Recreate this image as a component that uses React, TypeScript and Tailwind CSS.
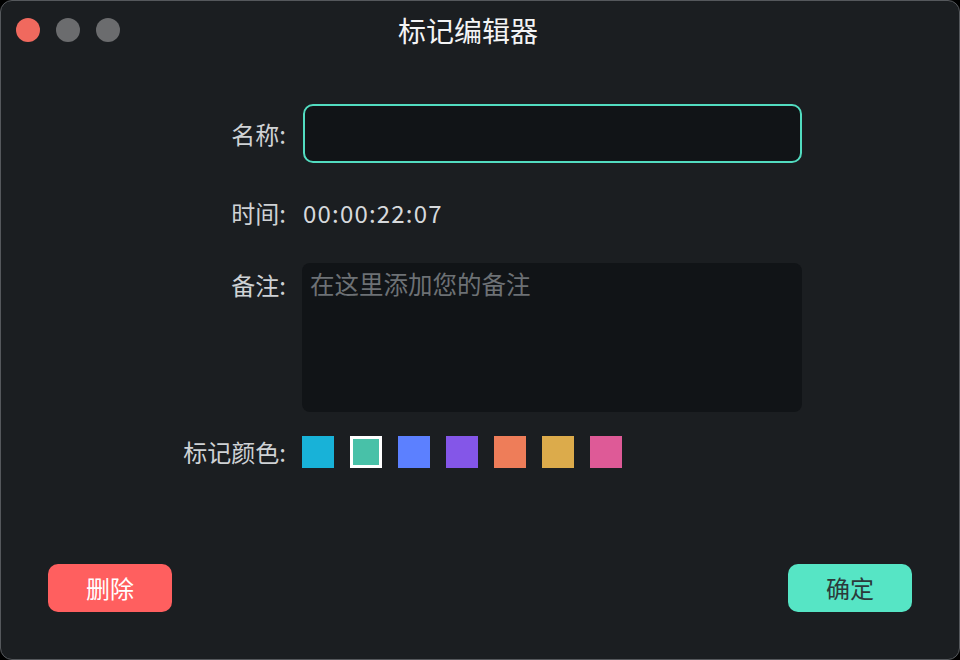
const colors = ["#18b2d8", "#48c1a8", "#5c80ff", "#8456e8", "#ee7d59", "#dcab4b", "#de5a97"];

export default function App() {
  const font = { fontFamily: '"Noto Sans CJK SC", "Noto Sans", sans-serif' };
  return (
    <div className="w-[960px] h-[660px] bg-black" style={font}>
      <div className="w-full h-full rounded-[12px] bg-[#1b1e21] border border-[#55585c] flex flex-col relative overflow-hidden">
        <div className="h-[56px] flex items-center relative">
          <div className="flex gap-[16px] pl-[15px] pt-[1px]">
            <span className="w-[24px] h-[24px] rounded-full bg-[#f0695e]" />
            <span className="w-[24px] h-[24px] rounded-full bg-[#6b6c6e]" />
            <span className="w-[24px] h-[24px] rounded-full bg-[#6b6c6e]" />
          </div>
          <div className="absolute inset-0 flex items-center justify-center pt-[2px] pr-[24px] text-[28px] text-[#f3f4f5]">
            标记编辑器
          </div>
        </div>

        <div className="grid grid-cols-[285px_500px] gap-x-[16px] mt-[47px] text-[24px] text-[#cfd2d5]">
          <div className="h-[59px] flex items-center justify-end">名称:</div>
          <div className="h-[59px] rounded-[10px] border-2 border-[#52dcc0] bg-[#111417] ml-[1px]" />

          <div className="h-[100px] flex items-center justify-end">时间:</div>
          <div className="h-[100px] flex items-center pl-[1px] text-[#d6d9dc] tracking-[1.2px]">00:00:22:07</div>

          <div className="h-[149px] flex items-start justify-end pt-[4px]">备注:</div>
          <div className="h-[149px] rounded-[8px] bg-[#111417] px-[8px] pt-[3px] text-[24.5px] text-[#6d7175]">
            在这里添加您的备注
          </div>

          <div className="h-[32px] mt-[24px] flex items-center justify-end">标记颜色:</div>
          <div className="h-[32px] mt-[24px] flex gap-[16px]">
            {colors.map((c, i) => (
              <span
                key={c}
                className={`w-[32px] h-[32px] ${i === 1 ? "border-[3px] border-white" : ""}`}
                style={{ backgroundColor: c }}
              />
            ))}
          </div>
        </div>

        <div className="mt-auto mb-[47px] flex justify-between px-[47px]">
          <button className="w-[124px] h-[48px] rounded-[10px] bg-[#ff5f5f] text-white text-[24px]">删除</button>
          <button className="w-[124px] h-[48px] rounded-[10px] bg-[#56e5c5] text-[#2b3a3a] text-[24px]">确定</button>
        </div>
      </div>
    </div>
  );
}
